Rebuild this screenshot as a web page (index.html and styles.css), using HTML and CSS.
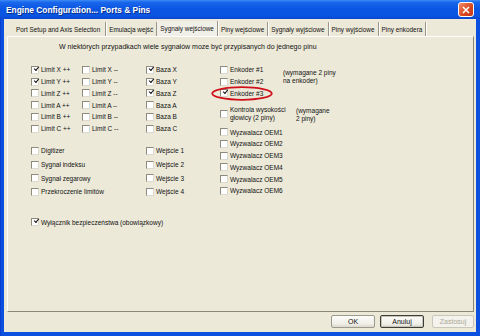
FILE: index.html
```html
<!DOCTYPE html>
<html>
<head>
<meta charset="utf-8">
<link rel="stylesheet" href="styles.css">
</head>
<body>
<div class="window">
  <div class="titlebar">
    <span class="title">Engine Configuration... Ports &amp; Pins</span>
    <span class="close"><svg width="8" height="8" viewBox="0 0 8 8"><path d="M1 1L7 7M7 1L1 7" stroke="#fff" stroke-width="1.6"/></svg></span>
  </div>
  <div class="client">
    <div class="tabs">
      <span class="tab first">Port Setup and Axis Selection</span>
      <span class="tab">Emulacja wejść</span>
      <span class="tab active">Sygnały wejściowe</span>
      <span class="tab">Piny wejściowe</span>
      <span class="tab">Sygnały wyjściowe</span>
      <span class="tab">Piny wyjściowe</span>
      <span class="tab">Piny enkodera</span>
    </div>
    <div class="panel">
      <p class="intro">W niektórych przypadkach wiele sygnałów moze być przypisanych do jednego pinu</p>
      <div class="cols">
        <div class="left">
          <div class="grid g1">
            <label class="cb"><span class="box on"></span>Limit X ++</label>
            <label class="cb"><span class="box"></span>Limit X --</label>
            <label class="cb"><span class="box on"></span>Baza X</label>
            <label class="cb"><span class="box on"></span>Limit Y ++</label>
            <label class="cb"><span class="box"></span>Limit Y --</label>
            <label class="cb"><span class="box on"></span>Baza Y</label>
            <label class="cb"><span class="box"></span>Limit Z ++</label>
            <label class="cb"><span class="box"></span>Limit Z --</label>
            <label class="cb"><span class="box on"></span>Baza Z</label>
            <label class="cb"><span class="box"></span>Limit A ++</label>
            <label class="cb"><span class="box"></span>Limit A --</label>
            <label class="cb"><span class="box"></span>Baza A</label>
            <label class="cb"><span class="box"></span>Limit B ++</label>
            <label class="cb"><span class="box"></span>Limit B --</label>
            <label class="cb"><span class="box"></span>Baza B</label>
            <label class="cb"><span class="box"></span>Limit C ++</label>
            <label class="cb"><span class="box"></span>Limit C --</label>
            <label class="cb"><span class="box"></span>Baza C</label>
          </div>
          <div class="grid g2">
            <label class="cb"><span class="box"></span>Digitizer</label>
            <label class="cb"><span class="box"></span>Wejście 1</label>
            <label class="cb"><span class="box"></span>Sygnał indeksu</label>
            <label class="cb"><span class="box"></span>Wejście 2</label>
            <label class="cb"><span class="box"></span>Sygnał zegarowy</label>
            <label class="cb"><span class="box"></span>Wejście 3</label>
            <label class="cb"><span class="box"></span>Przekroczenie limitów</label>
            <label class="cb"><span class="box"></span>Wejście 4</label>
          </div>
          <label class="cb safety"><span class="box on"></span>Wyłącznik bezpieczeństwa (obowiązkowy)</label>
        </div>
        <div class="right">
          <div class="enc">
            <div class="list">
              <label class="cb"><span class="box"></span>Enkoder #1</label>
              <label class="cb"><span class="box"></span>Enkoder #2</label>
              <label class="cb marked"><span class="box on"></span>Enkoder #3<svg class="ring" width="62" height="15" viewBox="0 0 62 15"><ellipse cx="31" cy="7.5" rx="29.8" ry="6.3" fill="none" stroke="#d0101a" stroke-width="1.8"/></svg></label>
            </div>
            <p class="note n1">(wymagane 2 piny<br>na enkoder)</p>
          </div>
          <div class="kontrola">
            <label class="cb two"><span class="box"></span><span>Kontrola wysokości<br>głowicy (2 piny)</span></label>
            <p class="note n2">(wymagane<br>2 piny)</p>
          </div>
          <div class="list oem">
            <label class="cb"><span class="box"></span>Wyzwalacz OEM1</label>
            <label class="cb"><span class="box"></span>Wyzwalacz OEM2</label>
            <label class="cb"><span class="box"></span>Wyzwalacz OEM3</label>
            <label class="cb"><span class="box"></span>Wyzwalacz OEM4</label>
            <label class="cb"><span class="box"></span>Wyzwalacz OEM5</label>
            <label class="cb"><span class="box"></span>Wyzwalacz OEM6</label>
          </div>
        </div>
      </div>
    </div>
    <div class="buttons">
      <span class="btn">OK</span>
      <span class="btn default">Anuluj</span>
      <span class="btn disabled">Zastosuj</span>
    </div>
  </div>
</div>
</body>
</html>
```
FILE: styles.css
```css
* { box-sizing: border-box; }
html, body { margin: 0; padding: 0; }
body {
  width: 480px;
  height: 336px;
  overflow: hidden;
  font-family: "Liberation Sans", Arial, sans-serif;
  font-size: 7px;
  color: #111;
}
.window {
  width: 480px;
  height: 336px;
  display: flex;
  flex-direction: column;
  background: #0b50de;
  padding: 0 4px 4px 3px;
  border-left: 1px solid #0a3fcf;
}
.titlebar {
  height: 19px;
  margin: 0 -4px 0 -4px;
  padding: 0 6px 0 6px;
  display: flex;
  align-items: center;
  justify-content: space-between;
  background: linear-gradient(#3d8cf5 0%, #1a67ec 12%, #0b56e3 45%, #0a55e0 80%, #0a47d2 100%);
}
.title {
  color: #fff;
  font-weight: bold;
  font-size: 8.4px;
  text-shadow: 1px 1px 0 #0a2f8a;
}
.close {
  width: 16px;
  height: 15px;
  border: 1px solid #fff;
  border-radius: 3px;
  background: linear-gradient(135deg, #f08a66, #d6461f 60%, #c13a18);
  display: flex;
  align-items: center;
  justify-content: center;
}
.client {
  flex: 1;
  background: #ece9d8;
  padding: 2px 2px 4px 3px;
  display: flex;
  flex-direction: column;
}
.tabs {
  display: flex;
  height: 15px;
  padding-left: 4px;
  align-items: stretch;
  font-size: 6.4px;
}
.tab {
  padding: 0 3px;
  display: flex;
  align-items: center;
  border-right: 1px solid #9a978a;
  box-shadow: 1px 0 0 #fff;
  margin-top: 1px;
  white-space: nowrap;
}
.tab.first {
  padding: 0 5px;
}
.tab.active {
  background: #f1f0e8;
  margin-top: 0;
}
.panel {
  height: 276px;
  border: 1px solid;
  border-color: #fdfdfb #8a8778 #8a8778 #fdfdfb;
  background: #ece9d8;
  padding: 5px 0 0 23px;
}
.intro {
  margin: 0 0 12px 28px;
  line-height: 10px;
  white-space: nowrap;
}
.cols {
  display: flex;
  font-size: 6.5px;
}
.left {
  width: 189px;
  display: flex;
  flex-direction: column;
}
.grid {
  display: grid;
}
.g1 {
  grid-template-columns: 51px 64px 74px;
  grid-auto-rows: 11.75px;
}
.g2 {
  grid-template-columns: 115px 74px;
  grid-auto-rows: 13.7px;
  margin-top: 9.5px;
}
.cb {
  display: flex;
  align-items: center;
  gap: 2px;
  white-space: nowrap;
  line-height: 9px;
}
.box {
  flex: none;
  width: 8px;
  height: 8px;
  background: #fff;
  border: 1px solid;
  border-color: #8d8b80 #dcdad0 #dcdad0 #8d8b80;
  position: relative;
}
.box.on::after {
  content: "";
  position: absolute;
  width: 2px;
  height: 4px;
  border: solid #111;
  border-width: 0 1.5px 1.5px 0;
  transform: rotate(40deg);
  transform-origin: 100% 100%;
  left: 0.5px;
  top: -1px;
}
.safety {
  height: 12px;
  margin-top: 17.5px;
}
.right {
  display: flex;
  flex-direction: column;
}
.enc {
  display: flex;
}
.list {
  display: grid;
  grid-auto-rows: 11.75px;
}
.enc .list {
  width: 63px;
}
.marked {
  position: relative;
}
.ring {
  position: absolute;
  left: -9px;
  top: -2px;
}
.note {
  margin: 0;
  line-height: 7.5px;
  white-space: nowrap;
}
.n1 {
  padding-top: 5px;
}
.kontrola {
  display: flex;
  margin-top: 7px;
  height: 16px;
}
.two {
  width: 76px;
  line-height: 8px;
}
.n2 {
  padding-top: 1px;
  line-height: 8px;
}
.oem {
  margin-top: 4px;
}
.buttons {
  display: flex;
  justify-content: flex-end;
  gap: 5px;
  padding-top: 3px;
}
.btn {
  width: 44px;
  height: 13px;
  display: flex;
  align-items: center;
  justify-content: center;
  border: 1px solid #9c9a8e;
  border-radius: 2px;
  background: linear-gradient(#fcfcfa, #f0efe8 70%, #dcd9cc);
}
.btn.default {
  border-color: #3d3d3a;
  box-shadow: inset 0 0 0 1px #c9c6b8;
}
.btn.disabled {
  color: #aca899;
  margin-left: 3px;
  width: 42px;
  background: #f3f2ec;
  border-color: #c9c7ba;
}
```
